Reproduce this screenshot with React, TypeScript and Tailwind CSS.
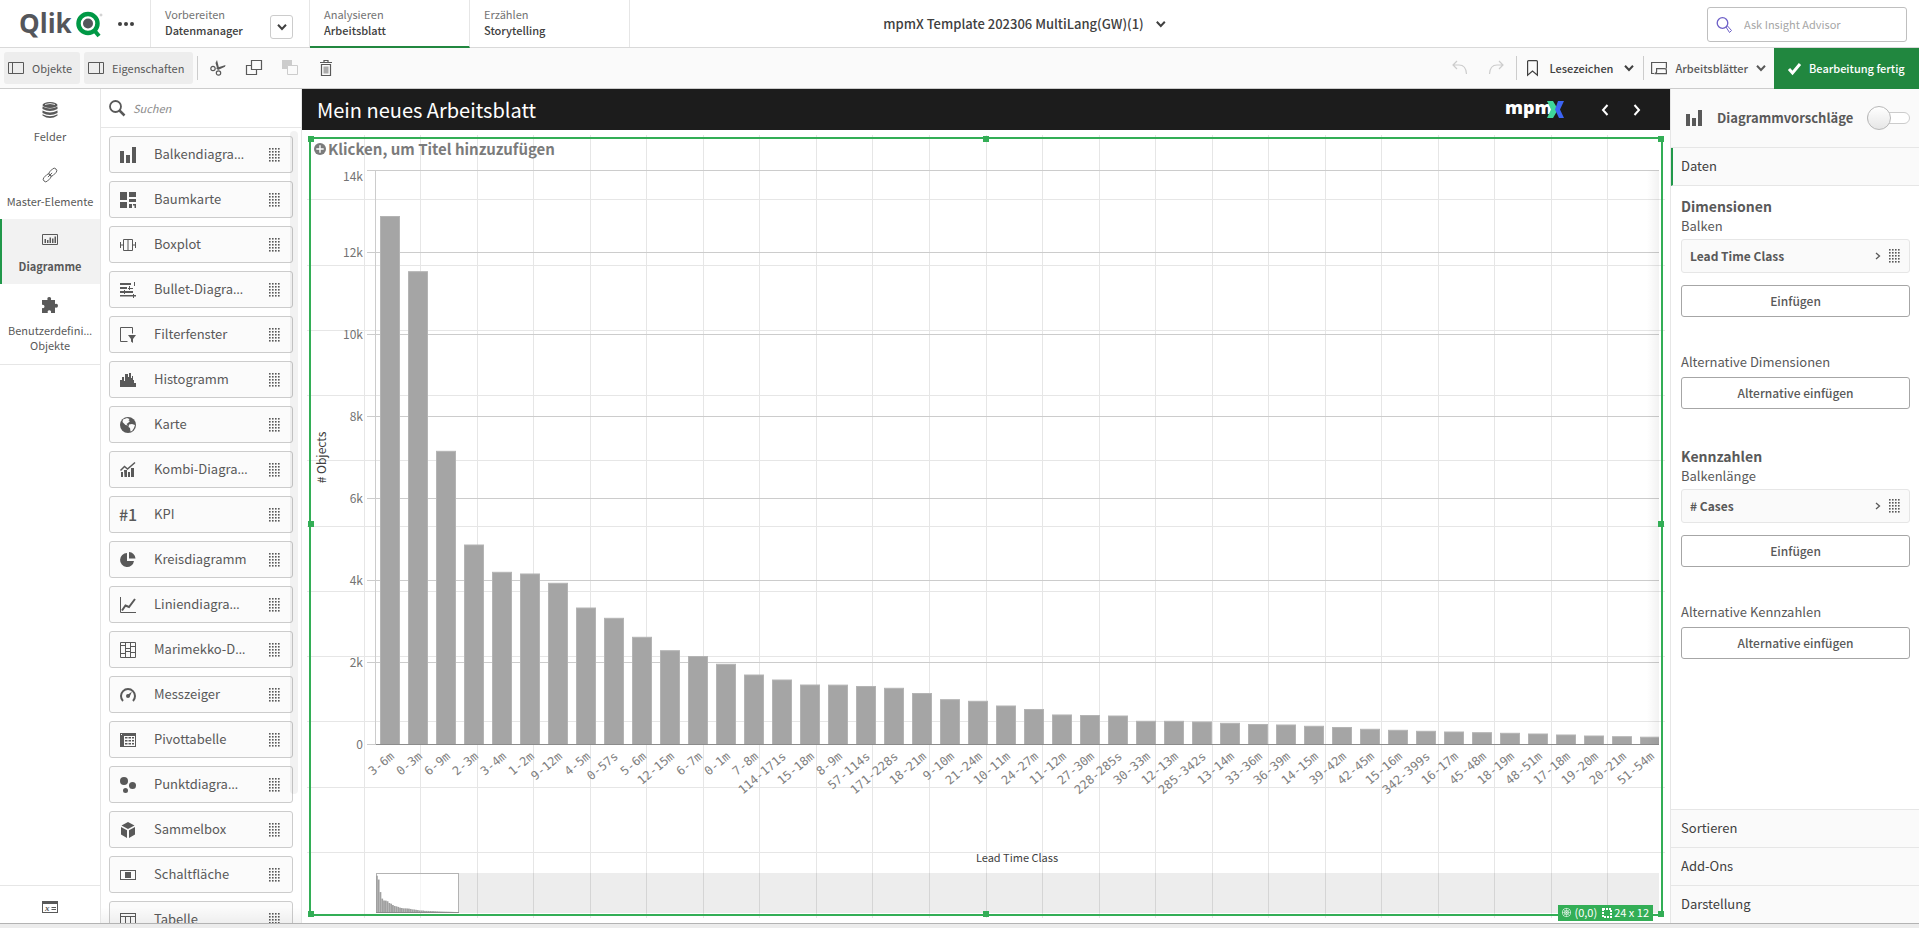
import { useLayoutEffect, useRef, useState } from 'react';
import type { ReactNode } from 'react';

type IconProps = { className?: string; children: ReactNode; box?: string };

function Icon({ className = 'size-4', children, box = '0 0 16 16' }: IconProps) {
  return (
    <svg viewBox={box} className={`shrink-0 overflow-visible ${className}`} fill="currentColor" aria-hidden="true">
      {children}
    </svg>
  );
}

function Chevron({ className = 'size-[10px]' }: { className?: string }) {
  return (
    <Icon className={className} box="0 0 10 10">
      <path d="M1 2.8 5 7l4-4.2" fill="none" stroke="currentColor" strokeWidth="2" />
    </Icon>
  );
}

function DragDots() {
  return (
    <Icon className="h-[14px] w-[11px]" box="0 0 11 14">
      {[0, 3, 6, 9].map((x) =>
        [0, 3, 6, 9, 12].map((y) => <rect key={`${x}-${y}`} x={x} y={y} width="1.600" height="1.600" />),
      )}
    </Icon>
  );
}

const barIcon = (
  <>
    <rect x="0" y="4" width="4" height="12" />
    <rect x="6" y="8" width="4" height="8" />
    <rect x="12" y="0" width="4" height="16" />
  </>
);

const tableIcon = <path d="M0 1h16v14H0zM1 2v2h14V2zM1 5v9h4V5zM6 5v9h4V5zM11 5v9h4V5z" fillRule="evenodd" />;

type ChartType = { name: string; cut?: boolean; icon: ReactNode };

const chartTypes: ChartType[] = [
  { name: 'Balkendiagra', cut: true, icon: barIcon },
  {
    name: 'Baumkarte',
    icon: <path d="M0 0h7v8H0zM9 0h7v5H9zM9 7h7v3H9zM0 10h7v6H0zM9 12h3v4H9zM13 12h3v1.500h-3zM14.500 13h1.500v3h-1.500z" />,
  },
  {
    name: 'Boxplot',
    icon: (
      <path d="M3.500 2.500h9v11h-9zM8 2.500v11M.5 5v6M.5 8h3M15.500 5v6M12.500 8h3" fill="none" stroke="currentColor" />
    ),
  },
  {
    name: 'Bullet-Diagra',
    cut: true,
    icon: <path d="M0 1h11v2H0zM0 5h7v2H0zM0 9h13v2H0zM0 13h16v1.500H0zM14 0h1v4h-1zM9 4h1v4H9zM8 6h5v1H8zM4 8h1v4H4zM13 12h1v4h-1z" />,
  },
  {
    name: 'Filterfenster',
    icon: (
      <>
        <path d="M12.500 6.500V.5H.5v14h7" fill="none" stroke="currentColor" />
        <path d="M8 8h8l-3 4v4l-2-1.500V12z" />
      </>
    ),
  },
  { name: 'Histogramm', icon: <path d="M0 15V8h2V5h2v4h1V2h3v3h1V1h2v5h1V4h1v4h1v3h2v4z" /> },
  {
    name: 'Karte',
    icon: (
      <>
        <circle cx="8" cy="8" r="8" />
        <path d="M3 2.500 7 1l2.500 1-1 1.500L10 4l-2 2-1.500 1L8 8.500 5.500 8 2.500 5zM9 7.500l3-.5 3 1-1 3-2 3-1.500.500L10 11 8.500 10z" fill="#fbfbfb" />
      </>
    ),
  },
  {
    name: 'Kombi-Diagra',
    cut: true,
    icon: (
      <>
        <path d="M.5 8.500 4.500 4.500 7.500 7 15 .5" fill="none" stroke="currentColor" strokeWidth="1.500" />
        <path d="M1 10h2v5H1zM4 8h3v7H4.500zM8 10h2v5H8zM11 6h3v9h-3z" />
      </>
    ),
  },
  {
    name: 'KPI',
    icon: (
      <text x="-1" y="14" fontSize="16" fontWeight="500" className="font-['Noto_Sans_CJK_SC',sans-serif]">
        #1
      </text>
    ),
  },
  {
    name: 'Kreisdiagramm',
    icon: (
      <>
        <path d="M7 1a7 7 0 1 0 7 8H7z" />
        <path d="M9 0v6.500h6.500A7 7 0 0 0 9 0z" />
      </>
    ),
  },
  {
    name: 'Liniendiagra',
    cut: true,
    icon: (
      <>
        <path d="M.5 0v15.500H16" fill="none" stroke="currentColor" />
        <path d="M2 13.500 5.500 8.500 9 10 15 2" fill="none" stroke="currentColor" strokeWidth="2" />
      </>
    ),
  },
  {
    name: 'Marimekko-D',
    cut: true,
    icon: (
      <path
        d="M.5.5h15v15H.5zM5.500.5v15M10.500.5v15M.5 3.500h5M.5 11.500h5M5.500 6.500h5M5.500 9.500h5M10.500 4.500h5M10.500 10.500h5"
        fill="none"
        stroke="currentColor"
      />
    ),
  },
  {
    name: 'Messzeiger',
    icon: (
      <>
        <path d="M3 14A7 7 0 1 1 13 14" fill="none" stroke="currentColor" strokeWidth="2" />
        <circle cx="8" cy="9" r="2" />
        <path d="M7.500 8 12 4.500 9.500 10z" />
      </>
    ),
  },
  {
    name: 'Pivottabelle',
    icon: (
      <path
        d="M0 1h16v14H0zM4 4v10h11V4zM1 2v1h1V2zM5 5h2.500v1.500H5zM8.500 5H11v1.500H8.500zM12 5h2v1.500h-2zM5 8h2.500v1.500H5zM8.500 8H11v1.500H8.500zM12 8h2v1.500h-2zM5 11h2.500v1.500H5zM8.500 11H11v1.500H8.500zM12 11h2v1.500h-2z"
        fillRule="evenodd"
      />
    ),
  },
  {
    name: 'Punktdiagra',
    cut: true,
    icon: (
      <>
        <circle cx="4" cy="4" r="4" />
        <circle cx="12.500" cy="8.500" r="3.500" />
        <circle cx="5.500" cy="13.500" r="2.500" />
      </>
    ),
  },
  { name: 'Sammelbox', icon: <path d="m8 0 6.500 3.500L8 7 1.500 3.500zM1 5l6 3.300V16l-6-3.500zM15 5 9 8.300V16l6-3.500z" /> },
  { name: 'Schaltfläche', icon: <path d="M0 3h16v10H0zM1 4v8h14V4zM5 5h6v6H5z" fillRule="evenodd" /> },
  { name: 'Tabelle', icon: tableIcon },
];

const data: [string, number][] = [
  ['3-6m', 12878], ['0-3m', 11532], ['6-9m', 7151], ['2-3m', 4866], ['3-4m', 4200], ['1-2m', 4159],
  ['9-12m', 3932], ['4-5m', 3329], ['0-57s', 3078], ['5-6m', 2615], ['12-15m', 2288], ['6-7m', 2146],
  ['0-1m', 1956], ['7-8m', 1695], ['114-171s', 1573], ['15-18m', 1451], ['8-9m', 1448], ['57-114s', 1415],
  ['171-228s', 1371], ['18-21m', 1244], ['9-10m', 1093], ['21-24m', 1054], ['10-11m', 939], ['24-27m', 854],
  ['11-12m', 720], ['27-30m', 707], ['228-285s', 695], ['30-33m', 566], ['12-13m', 565], ['285-342s', 549],
  ['13-14m', 517], ['33-36m', 488], ['36-39m', 476], ['14-15m', 444], ['39-42m', 415], ['42-45m', 371],
  ['15-16m', 346], ['342-399s', 322], ['16-17m', 305], ['45-48m', 288], ['18-19m', 273], ['48-51m', 256],
  ['17-18m', 232], ['19-20m', 207], ['20-21m', 190], ['51-54m', 178],
];

function useSize() {
  const ref = useRef<HTMLDivElement>(null);
  const [size, setSize] = useState({ w: 0, h: 0 });
  useLayoutEffect(() => {
    const el = ref.current;
    if (!el) return;
    const read = () => setSize({ w: el.clientWidth, h: el.clientHeight });
    read();
    const observer = new ResizeObserver(read);
    observer.observe(el);
    return () => observer.disconnect();
  }, []);
  return { ref, ...size };
}

function SheetGrid({ w, h }: { w: number; h: number }) {
  const cols = 24;
  const rows = 12;
  const left = 6;
  const top = 5;
  const stepX = (w - 11) / cols;
  const stepY = (h - 10) / rows;
  return (
    <svg width={w} height={h} className="absolute inset-0" stroke="#e6e6e6" aria-hidden="true">
      {Array.from({ length: cols - 1 }, (_, i) => {
        const x = Math.floor(left + (i + 1) * stepX - 0.5) + 0.5;
        return <line key={`c${i}`} x1={x} x2={x} y1={top} y2={h - top} />;
      })}
      {Array.from({ length: rows - 1 }, (_, i) => {
        const y = Math.floor(top + (i + 1) * stepY - 0.5) + 0.5;
        return <line key={`r${i}`} x1={left - 1} x2={w - 5} y1={y} y2={y} />;
      })}
    </svg>
  );
}

function BarChart() {
  const { ref, w, h } = useSize();
  const right = w - 2;
  const base = h - 169.5;
  const top = 7.5;
  const scale = (base - top) / 14000;
  const middle = (64 + right) / 2;
  return (
    <div ref={ref} className="relative min-h-0 flex-1">
      {w > 0 && (
        <svg width={w} height={h} className="absolute inset-0 font-['Noto_Sans_CJK_SC',sans-serif]">
          <defs>
            <clipPath id="plot">
              <rect x="0" y="0" width={right} height={h} />
            </clipPath>
            <linearGradient id="edge">
              <stop offset="0" stopColor="#000" stopOpacity="0" />
              <stop offset="1" stopColor="#000" stopOpacity="0.05" />
            </linearGradient>
          </defs>
          {[0, 2, 4, 6, 8, 10, 12, 14].map((k) => {
            const y = Math.floor(base - k * 1000 * scale) + 0.5;
            return (
              <g key={k}>
                <line x1="56" x2={right} y1={y} y2={y} stroke="#cccccc" />
                <text x="52" y={k === 14 ? y + 10 : y + 4} textAnchor="end" fontSize="12" fill="#737373">
                  {k === 0 ? '0' : `${k}k`}
                </text>
              </g>
            );
          })}
          <line x1="64.500" x2="64.500" y1={top} y2={base} stroke="#cccccc" />
          <g clipPath="url(#plot)">
            {data.map(([label, value], i) => (
              <rect
                key={label}
                x={69.5 + i * 28}
                y={base - value * scale}
                width="19"
                height={value * scale}
                fill="#a5a5a5"
                stroke="#b4b4b4"
              />
            ))}
            <line x1="65" x2={right} y1={base} y2={base} stroke="#8c8c8c" />
          </g>
          <g className="font-['DejaVu_Sans_Mono',monospace]" fontSize="12" fill="#808080" textAnchor="end">
            {data.map(([label], i) => (
              <text key={label} transform={`translate(${84 + i * 28} ${base + 13}) rotate(-40)`}>
                {label}
              </text>
            ))}
          </g>
          <rect x={right - 12} y={top} width="12" height={base - top} fill="url(#edge)" />
          <g fill="#404040" textAnchor="middle">
            <text x={middle} y={h - 52} fontSize="11">
              Lead Time Class
            </text>
            <text fontSize="12" transform={`translate(15 ${(base + top) / 2}) rotate(-90)`}>
              # Objects
            </text>
          </g>
          <rect x="147" y={h - 41} width={right - 147} height="40" fill="#000" opacity="0.07" />
          <rect x="65.500" y={h - 40.5} width="82" height="39" fill="#fff" fillOpacity="0.6" stroke="#b3b3b3" />
          {data.map(([label, value], i) => (
            <rect
              key={label}
              x={65 + i * 1.78}
              y={h - 1.5 - (value / 14000) * 40}
              width="1.780"
              height={(value / 14000) * 40}
              fill="#a0a0a0"
            />
          ))}
          <line x1="65" x2="148" y1={h - 1.5} y2={h - 1.5} stroke="#8c8c8c" />
        </svg>
      )}
    </div>
  );
}

const handles = [
  '-left-[3px] -top-[3px]',
  'left-1/2 -ml-[3px] -top-[3px]',
  '-right-[3px] -top-[3px]',
  '-left-[3px] top-1/2 -mt-1.5',
  '-right-[3px] top-1/2 -mt-1.5',
  '-left-[3px] -bottom-[3px]',
  'left-1/2 -ml-[3px] -bottom-[3px]',
  '-right-[3px] -bottom-[3px]',
];

function Sheet() {
  const { ref, w, h } = useSize();
  return (
    <main className="flex min-w-0 flex-1 flex-col">
      <header className="flex h-[41px] shrink-0 items-center bg-[#1c1c1c] pl-[15px] pr-[29px] text-white">
        <h1 className="flex-1 text-[20px] leading-6">Mein neues Arbeitsblatt</h1>
        <svg width="60" height="22" viewBox="0 0 60 22" role="img" aria-label="mpmX" className="mr-9 overflow-visible">
          <text x="0" y="15" fontSize="18" fontWeight="800" fill="#fff" className="font-['Open_Sans',sans-serif]">
            mpm
          </text>
          <path d="M42 2h6l5 8.500-5 8.500h-6l4-8.500z" fill="#3fd69b" />
          <path d="M53 2h6l-4 8.500 4 8.500h-5l-4-8.500z" fill="#3c64f4" />
        </svg>
        <button aria-label="Vorheriges Arbeitsblatt" className="mr-6">
          <Icon className="h-3 w-2" box="0 0 8 12">
            <path d="M6.500 1 2 6l4.500 5" fill="none" stroke="currentColor" strokeWidth="2" />
          </Icon>
        </button>
        <button aria-label="Nächstes Arbeitsblatt">
          <Icon className="h-3 w-2" box="0 0 8 12">
            <path d="M1.500 1 6 6l-4.500 5" fill="none" stroke="currentColor" strokeWidth="2" />
          </Icon>
        </button>
      </header>
      <div ref={ref} className="relative min-h-0 flex-1 p-[7px]">
        <SheetGrid w={w} h={h} />
        <section className="relative flex h-full flex-col border-2 border-[#33ae56]">
          <h2 className="flex h-6 shrink-0 items-center gap-0.5 pb-1 pl-[3px] text-[15px] font-bold leading-5 text-[#7b7b7b]">
            <Icon className="size-3" box="0 0 13 13">
              <circle cx="6.500" cy="6.500" r="6.500" />
              <path d="M6.500 2.500v8M2.500 6.500h8" stroke="#fff" strokeWidth="1.500" />
            </Icon>
            Klicken, um Titel hinzuzufügen
          </h2>
          <BarChart />
          {handles.map((place) => (
            <span key={place} className={`absolute size-1.5 bg-[#33ae56] ${place}`} />
          ))}
          <div className="absolute -bottom-[7px] right-2 flex h-4 items-center gap-[3px] bg-[#33ae56] px-1 pb-px text-[11px] leading-[15px] text-white">
            <Icon className="size-[9px]" box="0 0 10 10">
              <circle cx="5" cy="5" r="4.500" fill="none" stroke="#fff" strokeWidth="0.700" />
              <circle cx="5" cy="5" r="2.300" fill="none" stroke="#fff" strokeWidth="0.700" />
              <path d="M0 5h10M5 0v10M1.500 1.500l7 7M8.500 1.500l-7 7" stroke="#fff" strokeWidth="0.500" />
            </Icon>
            <span>(0,0)</span>
            <Icon className="ml-0.5 size-[10px]" box="0 0 10 10">
              <rect x="1" y="1" width="8" height="8" fill="none" stroke="#fff" strokeWidth="2" strokeDasharray="2 1" />
            </Icon>
            <span className="-ml-px">24 x 12</span>
          </div>
        </section>
      </div>
    </main>
  );
}

function TopBar() {
  return (
    <header className="relative flex h-12 shrink-0 border-b border-[#d9d9d9] bg-white">
      <div className="flex w-[151px] items-center border-r border-[#e6e6e6] pl-5">
        <svg width="84" height="28" viewBox="0 0 84 28" role="img" aria-label="Qlik" className="overflow-visible">
          <text x="-1" y="23" fontSize="26" fontWeight="700" fill="#54565b" className="font-['Open_Sans',sans-serif]">
            Qlik
          </text>
          <circle cx="68" cy="13.500" r="9.500" fill="none" stroke="#009845" strokeWidth="4.500" />
          <circle cx="68" cy="13.500" r="5" fill="#54565b" />
          <path d="m74 20 5 6" stroke="#009845" strokeWidth="4" />
          <circle cx="81" cy="5" r="1" fill="none" stroke="#aaa" strokeWidth="0.600" />
        </svg>
        <button aria-label="Menü" className="ml-3.5 text-[#404040]">
          <Icon className="h-1 w-4" box="0 0 16 4">
            <circle cx="2" cy="2" r="2" />
            <circle cx="8" cy="2" r="2" />
            <circle cx="14" cy="2" r="2" />
          </Icon>
        </button>
      </div>
      <nav className="flex text-[11px] leading-4 text-[#404040]">
        <div className="flex w-[159px] items-center border-r border-[#e6e6e6] pl-3.5">
          <a href="#daten" className="flex-1 pb-[3px]">
            <span className="block text-[#737373]">Vorbereiten</span>
            <span className="block font-medium">Datenmanager</span>
          </a>
          <button aria-label="Auswahl öffnen" className="mr-4 mt-1.5 flex h-6 w-[23px] items-center justify-center rounded-[3px] border border-[#cccccc]">
            <Chevron />
          </button>
        </div>
        <a href="#blatt" className="-mb-px flex w-40 flex-col justify-center border-b-2 border-r border-b-[#21873f] border-r-[#e6e6e6] pb-0.5 pl-3.5">
          <span className="text-[#737373]">Analysieren</span>
          <span className="font-medium">Arbeitsblatt</span>
        </a>
        <a href="#story" className="flex w-40 flex-col justify-center border-r border-[#e6e6e6] pb-[3px] pl-3.5">
          <span className="text-[#737373]">Erzählen</span>
          <span className="font-medium">Storytelling</span>
        </a>
      </nav>
      <button className="absolute left-1/2 top-3 flex h-6 -translate-x-1/2 items-center gap-3 whitespace-nowrap pl-[130px] text-[13px] font-medium text-[#404040]">
        mpmX Template 202306 MultiLang(GW)(1)
        <Chevron />
      </button>
      <label className="ml-auto mr-3 mt-[7px] flex h-[35px] w-[200px] items-center gap-3 rounded-[3px] border border-[#bfbfbf] px-2 text-[#6d5fc7]">
        <Icon className="size-4">
          <circle cx="6.500" cy="6" r="5.300" fill="none" stroke="currentColor" strokeWidth="1.300" />
          <path d="m10 10 1.500-1 4 4.500-2 2z" fill="none" stroke="currentColor" />
        </Icon>
        <input
          aria-label="Ask Insight Advisor"
          placeholder="Ask Insight Advisor"
          className="min-w-0 flex-1 bg-transparent text-[11px] outline-none placeholder:text-[#a6a6a6]"
        />
      </label>
    </header>
  );
}

function Toolbar() {
  return (
    <div className="flex h-[41px] shrink-0 items-center border-b border-[#cccccc] bg-[#fafafa] text-[11px] text-[#595959]">
      <button className="ml-1 flex h-8 w-[76px] items-center gap-2 rounded-[3px] bg-[#ededed] pl-1">
        <Icon className="h-3 w-4" box="0 0 16 12">
          <path d="M.5.5h15v11H.5zM4.500.5v11" fill="none" stroke="currentColor" />
        </Icon>
        Objekte
      </button>
      <button className="ml-1 flex h-8 w-[109px] items-center gap-2 rounded-[3px] bg-[#ededed] pl-1">
        <Icon className="h-3 w-4" box="0 0 16 12">
          <path d="M.5.5h15v11H.5zM11.500.5v11" fill="none" stroke="currentColor" />
        </Icon>
        Eigenschaften
      </button>
      <span className="ml-1 h-6 w-px bg-[#cccccc]" />
      <div className="ml-3 flex gap-5">
        <button aria-label="Ausschneiden">
          <Icon>
            <path d="M7 0 9 8 7.500 9.500 5.500 3zM6 8l9.500-3-.5 1.800L8 10z" />
            <circle cx="3" cy="8.500" r="2.200" fill="none" stroke="currentColor" strokeWidth="1.200" />
            <circle cx="8.500" cy="13" r="2.200" fill="none" stroke="currentColor" strokeWidth="1.200" />
          </Icon>
        </button>
        <button aria-label="Kopieren">
          <Icon>
            <path d="M5.500.5h10v9h-10zM5.500 5.500h-5v9h10v-5" fill="none" stroke="currentColor" strokeWidth="1.200" />
          </Icon>
        </button>
        <button aria-label="Einfügen" disabled className="text-[#cccccc]">
          <Icon>
            <path d="M0 0h10v9H0z" />
            <path d="M5.500 5.500h10v9h-10z" fill="#fafafa" stroke="currentColor" />
          </Icon>
        </button>
        <button aria-label="Löschen">
          <Icon>
            <path d="M3.500 4.500h9v11h-9zM2 2.500h12M6 2V.5h4V2" fill="none" stroke="currentColor" strokeWidth="1.200" />
            <path d="M5.500 6.500h5v7h-5z" opacity="0.500" />
          </Icon>
        </button>
      </div>
      <div className="ml-auto flex h-full items-center">
        <div className="mr-3 flex gap-5 text-[#cccccc]">
          <button aria-label="Rückgängig" disabled>
            <Icon>
              <path d="M5 1 1 5l4 4M1 5h6q7 0 7.500 9" fill="none" stroke="currentColor" strokeWidth="1.200" />
            </Icon>
          </button>
          <button aria-label="Wiederherstellen" disabled>
            <Icon>
              <path d="m11 1 4 4-4 4M15 5H9Q2 5 1.500 14" fill="none" stroke="currentColor" strokeWidth="1.200" />
            </Icon>
          </button>
        </div>
        <button className="flex h-6 items-center gap-[11px] border-l border-[#cccccc] pl-2.5 pr-[9px] font-medium text-[#404040]">
          <Icon className="h-4 w-[11px]" box="0 0 11 16">
            <path d="M.6 1.600Q.6.6 1.600.6h7.800q1 0 1 1v13.500L5.500 11 .6 15.100z" fill="none" stroke="currentColor" strokeWidth="1.200" />
          </Icon>
          Lesezeichen
          <Chevron />
        </button>
        <button className="flex h-6 items-center gap-2 border-l border-[#cccccc] pl-[7px] pr-2 font-medium">
          <Icon>
            <path d="M3 13.500H.6v-11h14.800v6M5.600 8.600h7.800q2 0 2 2v3H3.500q2.100 0 2.100-2z" fill="none" stroke="currentColor" strokeWidth="1.200" />
          </Icon>
          Arbeitsblätter
          <Chevron />
        </button>
        <button className="-my-px flex h-[42px] w-[145px] items-center gap-2 whitespace-nowrap bg-[#21873f] pl-3.5 font-medium text-white">
          <Icon className="size-[13px]" box="0 0 13 13">
            <path d="m1 7 3.500 4L12 2" fill="none" stroke="currentColor" strokeWidth="3" />
          </Icon>
          Bearbeitung fertig
        </button>
      </div>
    </div>
  );
}

function LeftRail() {
  const item = 'flex h-[65px] w-full flex-col items-center gap-2.5 pt-[13px] leading-4';
  return (
    <nav className="flex w-[101px] shrink-0 flex-col border-r border-[#e6e6e6] text-[11px] text-[#595959]">
      <button className={item}>
        <Icon>
          <ellipse cx="8" cy="3" rx="7.500" ry="3" />
          <path d="M.5 4.500q7.500 4 15 0V7q-7.500 4-15 0zM.5 8.500q7.500 4 15 0V11q-7.500 4-15 0zM.5 12.300q7.500 4 15 0v1.200q-7.500 5-15 0z" />
          <path d="M3 2.500q5-2 10 0" fill="none" stroke="#fff" strokeWidth="0.800" />
        </Icon>
        Felder
      </button>
      <button className={item}>
        <Icon>
          <g fill="none" stroke="currentColor" strokeWidth="0.900" transform="rotate(-45 8 8)">
            <rect x="-.5" y="5.500" width="9" height="5" rx="2.500" />
            <rect x="7.500" y="5.500" width="9" height="5" rx="2.500" />
            <path d="M5 8h6" />
          </g>
        </Icon>
        Master-Elemente
      </button>
      <button className="flex h-[65px] w-full flex-col items-center gap-2.5 border-l-2 border-[#21984a] bg-[#f2f2f2] pr-0.5 pt-[13px] font-bold leading-4">
        <Icon>
          <path d="M.5 2.500h15v10H.5z" fill="none" stroke="currentColor" />
          <path d="M2.500 7H4v4H2.500zM5 8h1.500v3H5zM7.500 5.500H9V11H7.500zM10 6.500h1.500V11H10zM12.500 4.500H14V11h-1.500z" />
        </Icon>
        Diagramme
      </button>
      <button className="flex h-[81px] w-full flex-col items-center gap-2.5 border-b border-[#e6e6e6] pt-[13px] leading-[15px]">
        <Icon>
          <path d="M0 3h5.500Q4.800 0 7.200 0T9 3h4v4q3-.8 3 1.700T13 10.500V16H9q.5-2.800-1.700-2.800T5.800 16H0v-5q2.500.6 2.500-1.500T0 7.800z" />
        </Icon>
        <span>
          Benutzerdefini<span className="font-['Open_Sans']">…</span>
          <br />
          Objekte
        </span>
      </button>
      <button aria-label="Variablen" className="mt-auto flex h-[38px] items-center justify-center border-t border-[#e6e6e6] pt-1">
        <Icon>
          <path d="M0 2h16v12H0zM1 5v8h14V5z" fillRule="evenodd" />
          <text x="3" y="12" fontSize="9" fontStyle="italic" fontWeight="700" className="font-['Liberation_Serif',serif]">
            x
          </text>
          <path d="M9.500 8H14v1H9.500zM9.500 10H14v1H9.500z" />
        </Icon>
      </button>
    </nav>
  );
}

function ObjectList() {
  return (
    <aside className="relative flex w-[201px] shrink-0 flex-col overflow-hidden border-r border-[#e6e6e6]">
      <label className="flex h-[39px] shrink-0 items-center gap-2 border-b border-[#e6e6e6] pl-2 text-[#595959]">
        <Icon>
          <circle cx="6.500" cy="6.500" r="5.500" fill="none" stroke="currentColor" strokeWidth="1.800" />
          <path d="m10.500 10.500 5 5" stroke="currentColor" strokeWidth="2.500" />
        </Icon>
        <input
          aria-label="Suchen"
          placeholder="Suchen"
          className="w-36 bg-transparent text-[11px] italic outline-none placeholder:text-[#8c8c8c]"
        />
      </label>
      <ul className="flex min-h-0 flex-1 flex-col gap-2 overflow-hidden pl-2 pr-2 pt-2">
        {chartTypes.map(({ name, cut, icon }) => (
          <li key={name} className="shrink-0">
            <button className="flex h-[37px] w-full items-center rounded-[3px] border border-[#cccccc] bg-[#fbfbfb] pl-2.5 pr-3 text-left text-[13px] text-[#595959]">
              <Icon>{icon}</Icon>
              <span className="ml-[18px] flex-1 whitespace-nowrap pb-px">
                {name}
                {cut && <span className="font-['Open_Sans']">…</span>}
              </span>
              <DragDots />
            </button>
          </li>
        ))}
      </ul>
      <div className="absolute right-[3px] top-[42px] h-[663px] w-2 rounded bg-black/5" />
      <div className="absolute inset-x-0 bottom-0 h-4 bg-linear-to-b from-transparent to-black/5" />
    </aside>
  );
}

function Group({ title, role, field, alt }: { title: string; role: string; field: string; alt: string }) {
  const button = 'h-8 w-full shrink-0 rounded-[3px] border border-[#a6a6a6] bg-white text-xs font-medium';
  return (
    <section className="flex h-[250px] shrink-0 flex-col text-xs text-[#595959]">
      <h3 className="text-[14px] font-bold leading-[18px]">{title}</h3>
      <p className="mt-0.5 text-[13px] leading-[18px]">{role}</p>
      <button className="mt-1 flex h-[34px] w-full shrink-0 items-center rounded-[3px] border border-[#e6e6e6] bg-[#fafafa] pl-2 pr-[9px] text-left font-bold">
        <span className="flex-1">{field}</span>
        <Icon className="mr-2 h-2 w-1.5" box="0 0 6 8">
          <path d="m1 1 3.500 3L1 7" fill="none" stroke="currentColor" strokeWidth="1.300" />
        </Icon>
        <DragDots />
      </button>
      <button className={`mt-3 ${button}`}>Einfügen</button>
      <p className="mt-9 text-[13px] leading-[18px]">{alt}</p>
      <button className={`mt-1.5 ${button}`}>Alternative einfügen</button>
    </section>
  );
}

function Properties() {
  return (
    <aside className="flex w-[249px] shrink-0 flex-col border-l border-[#e6e6e6] text-[13px] text-[#404040]">
      <label className="flex h-[59px] shrink-0 items-center border-b border-[#e6e6e6] bg-[#fafafa] pl-[15px] pr-[9px] font-bold text-[#595959]">
        <Icon>{barIcon}</Icon>
        <span className="ml-[15px] flex-1">Diagrammvorschläge</span>
        <input type="checkbox" role="switch" className="peer sr-only" />
        <span className="relative h-3 w-[43px] rounded-full border border-[#cccccc] bg-white">
          <span className="absolute -left-px -top-[7px] size-6 rounded-full border border-[#b8b8b8] bg-linear-to-b from-white to-[#e6e6e6]" />
        </span>
      </label>
      <button className="h-[38px] shrink-0 border-b border-l-2 border-b-[#e6e6e6] border-l-[#21984a] bg-[#fafafa] pb-0.5 pl-2 text-left">
        Daten
      </button>
      <div className="min-h-0 flex-1 overflow-hidden pl-2.5 pr-[9px] pt-[11px]">
        <Group title="Dimensionen" role="Balken" field="Lead Time Class" alt="Alternative Dimensionen" />
        <Group title="Kennzahlen" role="Balkenlänge" field="# Cases" alt="Alternative Kennzahlen" />
      </div>
      {['Sortieren', 'Add-Ons', 'Darstellung'].map((name) => (
        <button key={name} className="h-[38px] shrink-0 border-t border-[#e6e6e6] bg-[#fafafa] pb-px pl-2.5 text-left">
          {name}
        </button>
      ))}
    </aside>
  );
}

export default function App() {
  return (
    <div className="flex h-screen flex-col overflow-hidden bg-white font-['Noto_Sans_CJK_SC',sans-serif]">
      <TopBar />
      <Toolbar />
      <div className="flex min-h-0 flex-1">
        <LeftRail />
        <ObjectList />
        <Sheet />
        <Properties />
      </div>
      <footer className="h-[5px] shrink-0 border-t border-[#b3b3b3] bg-[#ececec]" />
    </div>
  );
}
